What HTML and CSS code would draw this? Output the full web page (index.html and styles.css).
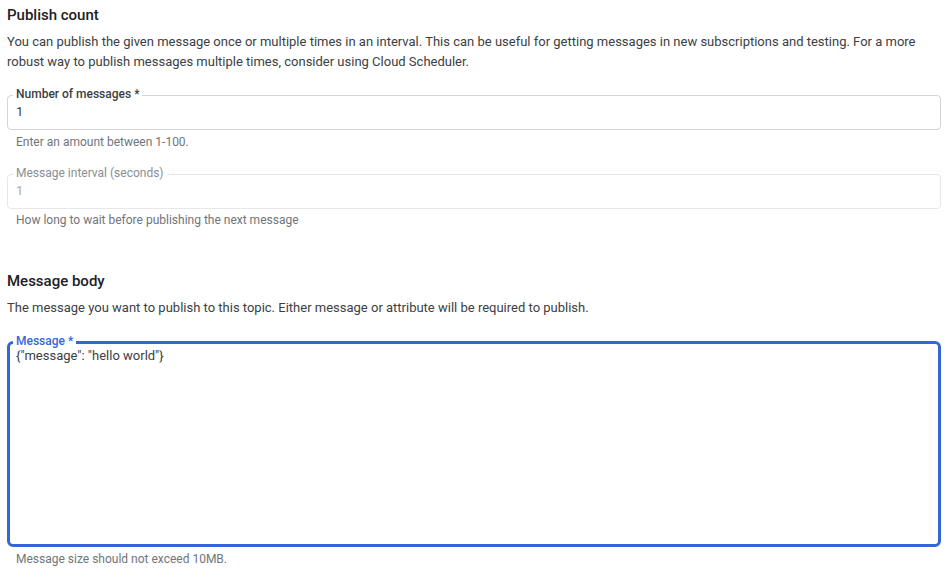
FILE: index.html
```html
<!DOCTYPE html>
<html lang="en">
<head>
<meta charset="utf-8">
<title>Publish message</title>
<link rel="stylesheet" href="styles.css">
</head>
<body>
<main class="page">
  <section class="section">
    <h2 class="section-title">Publish count</h2>
    <p class="section-desc">You can publish the given message once or multiple times in an interval. This can be useful for getting messages in new subscriptions and testing. For a more robust way to publish messages multiple times, consider using Cloud Scheduler.</p>

    <div class="field">
      <span class="field-label">Number of messages *</span>
      <div class="field-value">1</div>
    </div>
    <div class="field-hint">Enter an amount between 1-100.</div>

    <div class="field field-disabled">
      <span class="field-label">Message interval (seconds)</span>
      <div class="field-value">1</div>
    </div>
    <div class="field-hint field-hint-tight">How long to wait before publishing the next message</div>
  </section>

  <section class="section section-body">
    <h2 class="section-title">Message body</h2>
    <p class="section-desc">The message you want to publish to this topic. Either message or attribute will be required to publish.</p>

    <div class="field field-focused field-area">
      <span class="field-label">Message *</span>
      <div class="field-value">{"message": "hello world"}</div>
    </div>
    <div class="field-hint">Message size should not exceed 10MB.</div>
  </section>
</main>
</body>
</html>
```

FILE: styles.css
```css
* { box-sizing: border-box; }

html, body {
  margin: 0;
  padding: 0;
  background: #ffffff;
}

body {
  font-family: Roboto, "Liberation Sans", Arial, sans-serif;
  color: #3c4043;
  -webkit-font-smoothing: antialiased;
}

.page {
  padding: 3px 11px 0 7px;
}

.section-title {
  margin: 0;
  font-size: 15px;
  line-height: 24px;
  font-weight: 500;
  color: #202124;
}

.section-desc {
  margin: 5px 0 0;
  font-size: 13px;
  line-height: 20px;
  color: #3c4043;
}

.section-body {
  margin-top: 41px;
}

.field {
  position: relative;
  margin-top: 23px;
  border: 1px solid #d2d4d7;
  border-radius: 4px;
  padding: 6px 8px 7px 8px;
}

.field + .field-hint + .field {
  margin-top: 24px;
}

.field-label {
  position: absolute;
  top: -10px;
  left: 5px;
  padding: 0 3px;
  background: #ffffff;
  font-size: 12px;
  line-height: 16px;
  font-weight: 500;
  color: #3c4043;
}

.field-value {
  font-size: 13px;
  line-height: 20px;
  color: #3c4043;
}

.field-hint {
  margin-top: 4px;
  padding-left: 9px;
  font-size: 12px;
  line-height: 16px;
  color: #70757a;
}

.field-hint-tight {
  margin-top: 3px;
}

.field-disabled {
  border-color: #e6e7e9;
}

.field-disabled .field-label {
  font-weight: 400;
  color: #8a8e93;
}

.field-disabled .field-value {
  color: #a9acb0;
}

.field-focused {
  border: 3px solid #3367d6;
  border-radius: 6px;
  padding: 2px 6px 0 6px;
}

.field-focused .field-label {
  top: -11px;
  left: 3px;
  color: #3367d6;
}

.field-area {
  height: 206px;
}
```
